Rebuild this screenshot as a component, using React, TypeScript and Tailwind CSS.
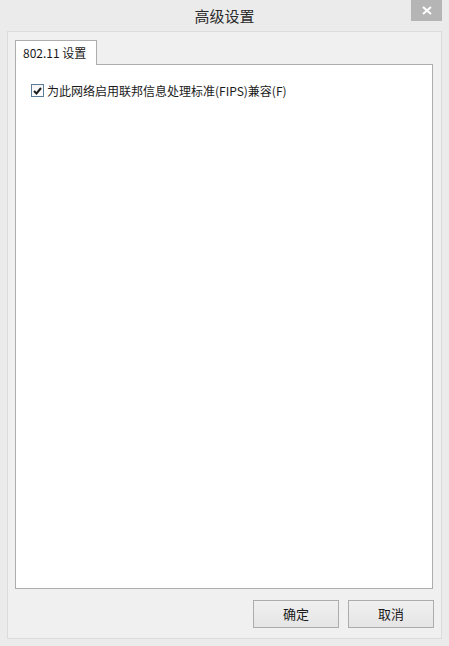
const cjk = "font-['Microsoft_YaHei','Noto_Sans_CJK_SC',sans-serif]";

function CloseButton() {
  return (
    <button className="absolute right-[7px] top-0 flex h-[21px] w-[31px] items-center justify-center bg-[#b5b5b5]">
      <svg width="10" height="9" viewBox="0 0 10 9">
        <path d="M1 1 L9 8 M9 1 L1 8" stroke="#ffffff" strokeWidth="2" />
      </svg>
    </button>
  );
}

function Checkbox({ checked }: { checked: boolean }) {
  return (
    <span className="flex h-[13px] w-[13px] shrink-0 items-center justify-center border border-[#5c7d9a] bg-gradient-to-b from-[#f4f4f4] to-[#ffffff]">
      {checked && (
        <svg width="9" height="8" viewBox="0 0 9 8">
          <path d="M1 4 L3.5 6.5 L8 1" fill="none" stroke="#1f1f1f" strokeWidth="2" />
        </svg>
      )}
    </span>
  );
}

function DialogButton({ label }: { label: string }) {
  return (
    <button className="flex h-[28px] w-[86px] items-center justify-center border border-[#acacac] bg-gradient-to-b from-[#f0f0f0] to-[#e5e5e5] text-[13px] text-[#1a1a1a]">
      {label}
    </button>
  );
}

export default function App() {
  return (
    <div className={`flex h-[646px] w-[449px] flex-col bg-[#ebebeb] ${cjk}`}>
      {/* title bar */}
      <div className="relative flex h-[31px] shrink-0 items-center justify-center">
        <span className="text-[15px] leading-none text-[#2b2b2b]">高级设置</span>
        <CloseButton />
      </div>

      <div className="mx-[7px] flex h-[608px] flex-col border border-[#dcdcdc] bg-[#f0f0f0] pl-[7px] pr-[8px] pt-[8px]">
        {/* tab strip */}
        <div className="flex">
          <div className="relative z-10 -mb-px flex h-[25px] w-[82px] items-center border border-b-0 border-[#adadad] bg-white pl-[7px] text-[12px] text-[#1a1a1a]">
            802.11 设置
          </div>
        </div>

        {/* tab page */}
        <div className="h-[525px] border border-[#adadad] bg-white px-[15px] pt-[19px]">
          <label className="flex items-center gap-[3px] text-[12px] leading-none text-[#1a1a1a]">
            <Checkbox checked />
            为此网络启用联邦信息处理标准(FIPS)兼容(F)
          </label>
        </div>

        {/* dialog buttons */}
        <div className="-mr-px mt-[11px] flex justify-end gap-[9px]">
          <DialogButton label="确定" />
          <DialogButton label="取消" />
        </div>
      </div>
    </div>
  );
}
